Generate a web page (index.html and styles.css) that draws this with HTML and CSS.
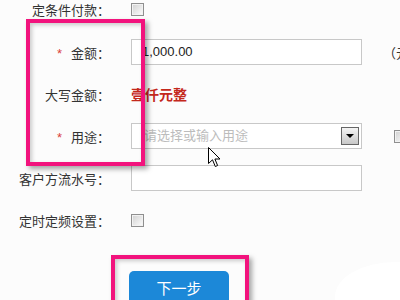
FILE: index.html
```html
<!DOCTYPE html>
<html lang="zh-CN">
<head>
<meta charset="UTF-8" />
<title>付款</title>
<link rel="stylesheet" href="styles.css">
</head>
<body>
  <div class="form">
    <div class="row first">
      <div class="label">定条件付款：</div>
      <div class="field"><span class="check"></span></div>
    </div>
    <div class="row">
      <div class="label"><span class="star">*</span>金额：</div>
      <div class="field">
        <div class="input">1,000.00</div>
        <span class="unit">（元</span>
      </div>
    </div>
    <div class="row">
      <div class="label">大写金额：</div>
      <div class="field"><span class="upper">壹仟元整</span></div>
    </div>
    <div class="row">
      <div class="label"><span class="star">*</span>用途：</div>
      <div class="field">
        <div class="input select">
          <span class="placeholder">请选择或输入用途</span>
          <span class="drop"></span>
        </div>
        <span class="check side"></span>
      </div>
    </div>
    <div class="row">
      <div class="label">客户方流水号：</div>
      <div class="field"><div class="input"></div></div>
    </div>
    <div class="row">
      <div class="label">定时定频设置：</div>
      <div class="field"><span class="check"></span></div>
    </div>
    <div class="actions">
      <button class="next">下一步</button>
    </div>
  </div>

  <!-- 标注框 -->
  <div class="mark mark-fields"></div>
  <div class="mark mark-button"></div>
  <div class="glow"></div>

  <svg class="cursor" width="13" height="21" viewBox="0 0 13 21">
    <path d="M0.5 0.5 L0.5 16.5 L4.5 12.8 L7.3 19.5 L9.6 18.5 L6.9 12 L12 12 Z" fill="#fff" stroke="#000" stroke-width="1"/>
  </svg>
</body>
</html>
```

FILE: styles.css
```css
body {
  margin: 0;
  background: #fcfcfc;
  font-family: "Liberation Sans", "Noto Sans CJK SC", sans-serif;
  font-size: 13px;
  color: #333;
  position: relative;
  height: 300px;
  overflow: hidden;
}
.form {
  display: flex;
  flex-direction: column;
  gap: 16px;
}
.row {
  display: grid;
  grid-template-columns: 110px 1fr;
  column-gap: 21px;
  height: 26px;
  align-items: center;
}
.row.first {
  height: 18px;
  margin-bottom: 5px;
}
.label {
  text-align: right;
  white-space: nowrap;
}
.star {
  color: #d9413a;
  margin-right: 9px;
}
.field {
  display: flex;
  align-items: center;
}
.input {
  box-sizing: border-box;
  width: 231px;
  height: 26px;
  border: 1px solid #c8c8c8;
  background: #fff;
  padding-left: 10px;
  line-height: 24px;
  color: #222;
}
.unit {
  margin-left: 21px;
  white-space: nowrap;
}
.select {
  display: flex;
  align-items: center;
  justify-content: space-between;
  padding-right: 2px;
  padding-left: 12px;
}
.placeholder {
  color: #bcbcbc;
}
.drop {
  box-sizing: border-box;
  width: 18px;
  height: 18px;
  border: 1px solid #666;
  background: linear-gradient(#f4f4f4, #c8c8c8);
  position: relative;
}
.drop::after {
  content: "";
  position: absolute;
  left: 4px;
  top: 6px;
  border-left: 4px solid transparent;
  border-right: 4px solid transparent;
  border-top: 4px solid #000;
}
.check {
  box-sizing: border-box;
  width: 13px;
  height: 13px;
  border: 1px solid #8f8f8f;
  background: linear-gradient(135deg, #d0d0d0, #fdfdfd);
  box-shadow: inset 0 0 0 1px #f2f2f2;
}
.check.side {
  margin-left: 32px;
}
.upper {
  color: #c4281c;
  font-weight: bold;
  font-size: 14px;
}
.actions {
  padding: 22px 0 0 129px;
}
.next {
  width: 100px;
  height: 36px;
  border: none;
  border-radius: 5px;
  background: #1c88d8;
  color: #fff;
  font-family: "Noto Sans CJK SC", sans-serif;
  font-size: 15px;
  padding: 0 0 4px;
}
.mark {
  position: absolute;
  box-sizing: border-box;
  border: 4px solid #f2137d;
  box-shadow: 3px 3px 5px rgba(0,0,0,0.35), inset 2px 2px 4px rgba(0,0,0,0.2);
}
.mark-fields {
  left: 26px;
  top: 19px;
  width: 119px;
  height: 147px;
}
.mark-button {
  left: 111px;
  top: 255px;
  width: 138px;
  height: 60px;
}
.glow {
  position: absolute;
  left: 335px;
  top: 262px;
  width: 120px;
  height: 70px;
  border-radius: 50%;
  background: #fff;
}
.cursor {
  position: absolute;
  left: 208px;
  top: 147px;
}
```
